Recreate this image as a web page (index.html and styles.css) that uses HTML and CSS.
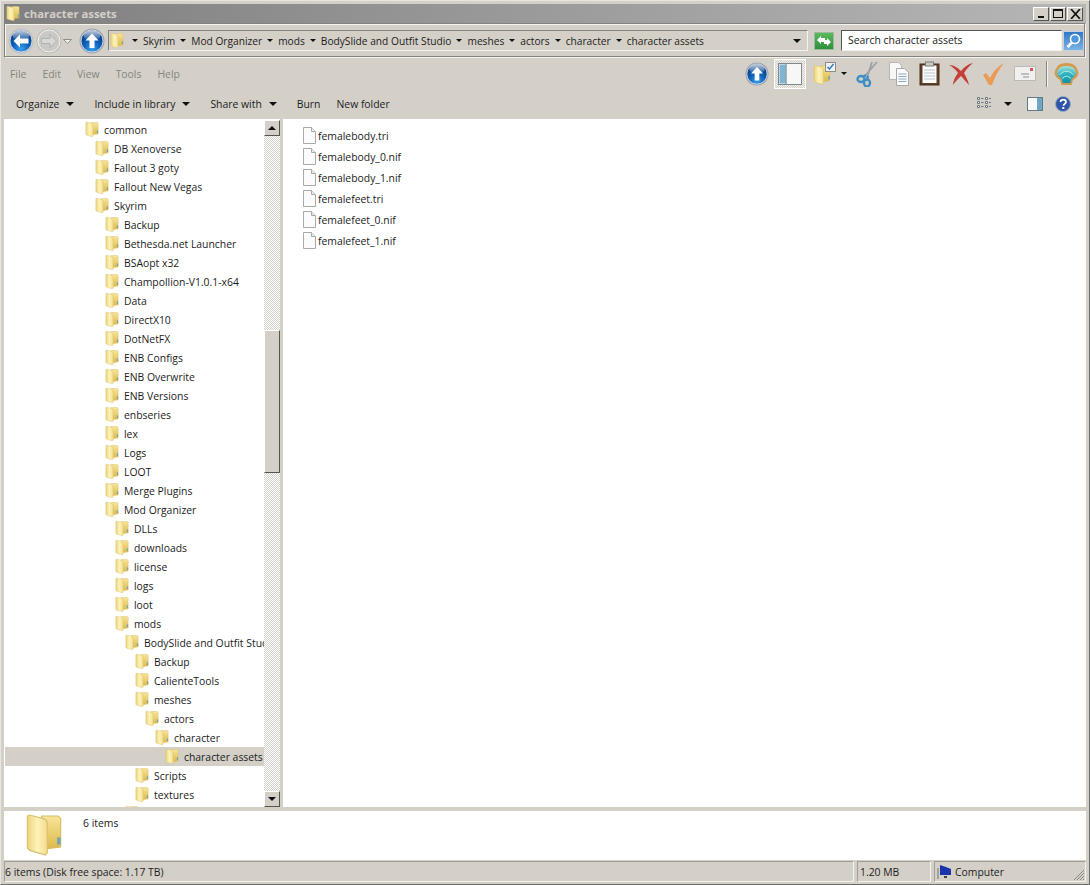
FILE: index.html
```html
<!DOCTYPE html>
<html lang="en">
<head>
  <meta charset="UTF-8">
  <title>character assets</title>
  <link rel="stylesheet" href="styles.css">
</head>
<body>
  <svg class="defs" width="0" height="0">
    <defs>
      <linearGradient id="folderBack" x1="0" y1="0" x2="1" y2="0">
        <stop offset="0" stop-color="#ecd47a"/>
        <stop offset="0.5" stop-color="#fdf3b8"/>
        <stop offset="1" stop-color="#f2dc8a"/>
      </linearGradient>
      <linearGradient id="folderFront" x1="0" y1="0" x2="0" y2="1">
        <stop offset="0" stop-color="#f8e59a"/>
        <stop offset="1" stop-color="#dcb94a"/>
      </linearGradient>
      <radialGradient id="blueBall" cx="0.5" cy="0.85" r="0.85">
        <stop offset="0" stop-color="#3aa0ee"/>
        <stop offset="0.45" stop-color="#0d5fb8"/>
        <stop offset="1" stop-color="#04326f"/>
      </radialGradient>
      <linearGradient id="shine" x1="0" y1="0" x2="0" y2="1">
        <stop offset="0" stop-color="#fff" stop-opacity=".75"/>
        <stop offset="1" stop-color="#fff" stop-opacity=".05"/>
      </linearGradient>
      <radialGradient id="shellFill" cx="0.5" cy="1" r="1">
        <stop offset="0" stop-color="#0f8fa8"/>
        <stop offset="0.6" stop-color="#35b4c0"/>
        <stop offset="1" stop-color="#a4e2dc"/>
      </radialGradient>
      <symbol id="folder" viewBox="0 0 16 18">
        <path d="M7 1h7l1 1v12l-8 1z" fill="url(#folderFront)" stroke="#d7bd62" stroke-width=".5"/>
        <path d="M1 1l1-.4 6 1.600c1 .4 1.400 1 1.400 2v12.200l-.8 1L2 15.500l-1-1z" fill="url(#folderBack)" stroke="#d8c070" stroke-width=".5"/>
        <rect x="13.500" y="10" width="1.500" height="3" fill="#6fa8b0"/>
      </symbol>
      <symbol id="file" viewBox="0 0 13 17">
        <path d="M.5.500h8l4 4v12H.5z" fill="#fbfbfb" stroke="#a9a9a9"/>
        <path d="M8.500.500v4h4" fill="#ececec" stroke="#a9a9a9"/>
      </symbol>
      <symbol id="upball" viewBox="0 0 26 26">
        <circle cx="13" cy="13" r="12.500" fill="#9aa3ad"/>
        <circle cx="13" cy="13" r="11" fill="url(#blueBall)" stroke="#e8eef5" stroke-width=".8"/>
        <ellipse cx="13" cy="7.500" rx="8.500" ry="5" fill="url(#shine)"/>
        <path d="M13 5.500l6.500 7h-4v7.500h-5v-7.500h-4z" fill="#fff"/>
      </symbol>
    </defs>
  </svg>

  <div class="window">
    <div class="titlebar">
      <svg class="title-icon"><use href="#folder"/></svg>
      <span class="title-text">character assets</span>
      <div class="win-btns">
        <button class="win-btn"><span class="glyph-min"></span></button>
        <button class="win-btn"><span class="glyph-max"></span></button>
        <button class="win-btn">
          <svg width="11" height="10" viewBox="0 0 11 10"><path d="M1 0l9 10M10 0l-9 10" stroke="#111" stroke-width="1.700"/></svg>
        </button>
      </div>
    </div>

    <div class="navbar">
      <svg class="nav-ball" viewBox="0 0 26 26">
        <circle cx="13" cy="13" r="12.500" fill="#b9bcc0"/>
        <circle cx="13" cy="13" r="11" fill="url(#blueBall)" stroke="#e8eef5" stroke-width=".8"/>
        <ellipse cx="13" cy="7.500" rx="8.500" ry="5" fill="url(#shine)"/>
        <path d="M5.500 13l6.500-6.500v4h8.500v5h-8.500v4z" fill="#fff"/>
      </svg>
      <svg class="nav-ball fwd" viewBox="0 0 26 26">
        <circle cx="13" cy="13" r="12.500" fill="#bdbdb9"/>
        <circle cx="13" cy="13" r="11" fill="#c9c9c5" stroke="#f2f2f0"/>
        <path d="M20.500 13L14 6.500v4H5.500v5H14v4z" fill="#d8d8d4" stroke="#a4a4a0" stroke-width=".7"/>
      </svg>
      <svg class="nav-drop" width="9" height="5" viewBox="0 0 9 5"><path d="M.5.500h8L4.500 4.500z" fill="#eee" stroke="#8f8f8b"/></svg>
      <svg class="nav-ball up"><use href="#upball"/></svg>

      <div class="address">
        <svg class="addr-icon"><use href="#folder"/></svg>
        <span class="tri crumb-first"></span><span class="crumb">Skyrim</span>
        <span class="tri"></span><span class="crumb">Mod Organizer</span>
        <span class="tri"></span><span class="crumb">mods</span>
        <span class="tri"></span><span class="crumb">BodySlide and Outfit Studio</span>
        <span class="tri"></span><span class="crumb">meshes</span>
        <span class="tri"></span><span class="crumb">actors</span>
        <span class="tri"></span><span class="crumb">character</span>
        <span class="tri"></span><span class="crumb">character assets</span>
        <span class="tri addr-drop"></span>
      </div>

      <div class="refresh">
        <svg width="18" height="16" viewBox="0 0 18 16">
          <path d="M2 7l4-4v2h4v4H6v2zM16 9l-4 4v-2H9V7h3V5z" fill="#fff"/>
        </svg>
      </div>
      <div class="search">Search character assets</div>
      <div class="search-btn">
        <svg width="17" height="17" viewBox="0 0 17 17">
          <circle cx="10" cy="7" r="4.500" fill="#4f96dc" stroke="#fff" stroke-width="1.600"/>
          <path d="M7 10.500L2.500 15" stroke="#fff" stroke-width="2.600"/>
        </svg>
      </div>
    </div>

    <div class="menubar">
      <span class="menu-item">File</span>
      <span class="menu-item">Edit</span>
      <span class="menu-item">View</span>
      <span class="menu-item">Tools</span>
      <span class="menu-item">Help</span>

      <div class="tools">
        <svg class="tool-up"><use href="#upball"/></svg>
        <div class="pane-toggle">
          <svg width="24" height="22" viewBox="0 0 24 22">
            <rect x=".5" y=".5" width="23" height="21" fill="#f7f7f7" stroke="#7f8890"/>
            <rect x="1.500" y="1.500" width="6" height="19" fill="#7fb4d2"/>
            <path d="M8 1v20" stroke="#58788e"/>
          </svg>
        </div>
        <svg class="tool-folder" width="24" height="26" viewBox="0 0 24 26">
          <use href="#folder" width="18" height="24" y="2"/>
          <rect x="12.500" y="1.500" width="10" height="9" fill="#f1f1ef" stroke="#8d8d8d"/>
          <path d="M14.500 6l2 2 4-5" fill="none" stroke="#2a6fc0" stroke-width="1.300"/>
        </svg>
        <span class="tri tool-drop"></span>
        <svg class="tool-icon" width="23" height="26" viewBox="0 0 23 26">
          <path d="M21 1L8 16M16 1L11 17" stroke="#9aa3a8" stroke-width="1.800" fill="none"/>
          <ellipse cx="5" cy="18" rx="3.500" ry="3" fill="none" stroke="#3f8fc4" stroke-width="2.400"/>
          <ellipse cx="11" cy="22" rx="3" ry="3.500" fill="none" stroke="#3f8fc4" stroke-width="2.400"/>
          <path d="M7 16l3-2M11 19l1-4" stroke="#3f8fc4" stroke-width="2.400"/>
        </svg>
        <svg class="tool-icon" width="22" height="24" viewBox="0 0 22 24">
          <path d="M1.500.500h9l3 3v14h-12z" fill="#f8f8f8" stroke="#b5b5b5"/>
          <path d="M8.500 6.500h8l4 4v13h-12z" fill="#fafafa" stroke="#a8a8a8"/>
          <path d="M10.500 12h8M10.500 14.500h8M10.500 17h8M10.500 19.500h8" stroke="#88a8c4"/>
        </svg>
        <svg class="tool-icon" width="21" height="25" viewBox="0 0 21 25">
          <rect x="1" y="3" width="19" height="21" fill="#5e3f28" stroke="#4a2f1c"/>
          <rect x="3.500" y="4.500" width="14" height="17.500" fill="#fbfbfb"/>
          <rect x="6.500" y="1" width="8" height="4" fill="#c9c9c5" stroke="#7d7d7d"/>
          <path d="M5 9h11M5 12h11M5 15h11M5 18h11" stroke="#b8c4cc"/>
        </svg>
        <svg class="tool-icon" width="24" height="24" viewBox="0 0 24 24">
          <path d="M0 3c5 0 9 3 12 6 3-4 7-7 12-8-4 3-7 7-9 10 2 4 4 7 5 12-3-3-6-7-8-9-3 3-6 6-8 9 0-4 2-8 5-12C7 8 4 5 0 3z" fill="#c53f38"/>
        </svg>
        <svg class="tool-icon" width="23" height="24" viewBox="0 0 23 24">
          <path d="M1 13l3-2 4 5C11 10 15 5 22 1c-4 5-9 13-12 22h-3z" fill="#ec9a55"/>
        </svg>
        <svg class="tool-icon" width="22" height="15" viewBox="0 0 22 15">
          <rect x=".5" y=".5" width="21" height="14" fill="#f0f0ee" stroke="#b9b9b5"/>
          <rect x="16" y="2" width="3" height="3" fill="#d8505a"/>
          <path d="M7 8h8M9 11h6" stroke="#8a8f94"/>
        </svg>
        <span class="tool-sep"></span>
        <svg class="tool-shell" width="25" height="24" viewBox="0 0 25 24">
          <path d="M12.500 1C8 1 5 2 3 5 1 8 0 11 1 13c1 2 3 4 5 5l1.500 5h10l1.500-5c2-1 4-3 5-5 1-2 0-5-2-8-2-3-5-4-9.500-4z" fill="#d4984e"/>
          <path d="M12.500 4C8 4 6 5 4.500 7 3 9 2.500 11 3.500 13l4 4 1 4h8l1-4 4-4c1-2 .5-4-1-6-1.500-2-3.500-3-8-3z" fill="url(#shellFill)"/>
          <path d="M5.500 13c4-5 10-5 14 0M8 16.500c3-3 6-3 9 0" fill="none" stroke="#bdeee8" stroke-width="1"/>
        </svg>
      </div>
    </div>

    <div class="cmdbar">
      <span class="cmd">Organize<span class="tri"></span></span>
      <span class="cmd">Include in library<span class="tri"></span></span>
      <span class="cmd">Share with<span class="tri"></span></span>
      <span class="cmd cmd-burn">Burn</span>
      <span class="cmd">New folder</span>
      <div class="cmd-right">
        <svg width="14" height="13" viewBox="0 0 14 13">
          <path d="M.5.500h2v2h-2zM.5 4.500h2v2h-2zM.5 8.500h2v2h-2zM8.500.500h2v2h-2zM8.500 4.500h2v2h-2zM8.500 8.500h2v2h-2z" fill="#f4f4f2" stroke="#6d7882"/>
          <path d="M4 1.500h2.500M4 5.500h2.500M4 9.500h2.500M12 1.500h2M12 5.500h2M12 9.500h2" stroke="#6d7882"/>
        </svg>
        <span class="tri view-drop"></span>
        <svg class="pane-icon" width="16" height="14" viewBox="0 0 16 14">
          <rect x=".5" y=".5" width="15" height="13" fill="#f8f8f8" stroke="#63778a"/>
          <rect x="10" y="1" width="5" height="12" fill="#6fa6c6"/>
        </svg>
        <svg class="help-icon" width="16" height="16" viewBox="0 0 16 16">
          <circle cx="8" cy="8" r="7.500" fill="#2f55a8" stroke="#9aa8c4"/>
          <path d="M5.500 6c0-3.200 5.500-3.200 5.500 0 0 2-2.500 1.800-2.500 3.800" fill="none" stroke="#fff" stroke-width="1.700"/>
          <rect x="7.300" y="11" width="2" height="2" fill="#fff"/>
        </svg>
      </div>
    </div>

    <div class="main">
      <div class="tree">
        <div class="tree-rows">
          <div class="row lv0"><svg><use href="#folder"/></svg>common</div>
          <div class="row lv1"><svg><use href="#folder"/></svg>DB Xenoverse</div>
          <div class="row lv1"><svg><use href="#folder"/></svg>Fallout 3 goty</div>
          <div class="row lv1"><svg><use href="#folder"/></svg>Fallout New Vegas</div>
          <div class="row lv1"><svg><use href="#folder"/></svg>Skyrim</div>
          <div class="row lv2"><svg><use href="#folder"/></svg>Backup</div>
          <div class="row lv2"><svg><use href="#folder"/></svg>Bethesda.net Launcher</div>
          <div class="row lv2"><svg><use href="#folder"/></svg>BSAopt x32</div>
          <div class="row lv2"><svg><use href="#folder"/></svg>Champollion-V1.0.1-x64</div>
          <div class="row lv2"><svg><use href="#folder"/></svg>Data</div>
          <div class="row lv2"><svg><use href="#folder"/></svg>DirectX10</div>
          <div class="row lv2"><svg><use href="#folder"/></svg>DotNetFX</div>
          <div class="row lv2"><svg><use href="#folder"/></svg>ENB Configs</div>
          <div class="row lv2"><svg><use href="#folder"/></svg>ENB Overwrite</div>
          <div class="row lv2"><svg><use href="#folder"/></svg>ENB Versions</div>
          <div class="row lv2"><svg><use href="#folder"/></svg>enbseries</div>
          <div class="row lv2"><svg><use href="#folder"/></svg>lex</div>
          <div class="row lv2"><svg><use href="#folder"/></svg>Logs</div>
          <div class="row lv2"><svg><use href="#folder"/></svg>LOOT</div>
          <div class="row lv2"><svg><use href="#folder"/></svg>Merge Plugins</div>
          <div class="row lv2"><svg><use href="#folder"/></svg>Mod Organizer</div>
          <div class="row lv3"><svg><use href="#folder"/></svg>DLLs</div>
          <div class="row lv3"><svg><use href="#folder"/></svg>downloads</div>
          <div class="row lv3"><svg><use href="#folder"/></svg>license</div>
          <div class="row lv3"><svg><use href="#folder"/></svg>logs</div>
          <div class="row lv3"><svg><use href="#folder"/></svg>loot</div>
          <div class="row lv3"><svg><use href="#folder"/></svg>mods</div>
          <div class="row lv4"><svg><use href="#folder"/></svg>BodySlide and Outfit Studio</div>
          <div class="row lv5"><svg><use href="#folder"/></svg>Backup</div>
          <div class="row lv5"><svg><use href="#folder"/></svg>CalienteTools</div>
          <div class="row lv5"><svg><use href="#folder"/></svg>meshes</div>
          <div class="row lv6"><svg><use href="#folder"/></svg>actors</div>
          <div class="row lv7"><svg><use href="#folder"/></svg>character</div>
          <div class="row lv8 selected"><svg><use href="#folder"/></svg>character assets</div>
          <div class="row lv5"><svg><use href="#folder"/></svg>Scripts</div>
          <div class="row lv5"><svg><use href="#folder"/></svg>textures</div>
          <div class="row lv4"><svg><use href="#folder"/></svg></div>
        </div>
        <div class="scrollbar">
          <div class="sb-btn"><span class="sb-up"></span></div>
          <div class="sb-track sb-before"></div>
          <div class="sb-thumb"></div>
          <div class="sb-track sb-after"></div>
          <div class="sb-btn"><span class="sb-down"></span></div>
        </div>
      </div>

      <div class="files">
        <div class="file"><svg><use href="#file"/></svg>femalebody.tri</div>
        <div class="file"><svg><use href="#file"/></svg>femalebody_0.nif</div>
        <div class="file"><svg><use href="#file"/></svg>femalebody_1.nif</div>
        <div class="file"><svg><use href="#file"/></svg>femalefeet.tri</div>
        <div class="file"><svg><use href="#file"/></svg>femalefeet_0.nif</div>
        <div class="file"><svg><use href="#file"/></svg>femalefeet_1.nif</div>
      </div>
    </div>

    <div class="details">
      <svg class="details-icon"><use href="#folder"/></svg>
      <span class="details-text">6 items</span>
    </div>

    <div class="statusbar">
      <div class="cell cell-main">6 items (Disk free space: 1.17 TB)</div>
      <div class="cell cell-size">1.20 MB</div>
      <div class="cell cell-zone">
        <svg width="16" height="16" viewBox="0 0 16 16">
          <path d="M1 4v11" stroke="#77776f"/>
          <path d="M3 1l6 2 5 2v6H3z" fill="#1a33a8"/>
          <path d="M7 12h3v2H7z" fill="#444"/>
        </svg>
        Computer
        <svg class="grip" width="12" height="12" viewBox="0 0 12 12">
          <path d="M11 1L1 11M11 4l-7 7M11 7l-4 4M11 10l-1 1" stroke="#8a8a84"/>
        </svg>
      </div>
    </div>
  </div>
</body>
</html>
```

FILE: styles.css
```css
* {
  box-sizing: border-box;
}
html, body {
  margin: 0;
  height: 100%;
  overflow: hidden;
}
body {
  font-family: 'Open Sans', 'Noto Sans', sans-serif;
  font-size: 10.4px;
  color: #1c1c1c;
  background-color: #d4d0c8;
}
.defs {
  position: absolute;
}
.window {
  height: 885px;
  display: flex;
  flex-direction: column;
  padding: 3px 3px 2px 3px;
  background-color: #d4d0c8;
  border: 1px solid #6e6e6a;
  border-top-color: #e8e6e0;
  border-left-color: #e8e6e0;
}

/* title bar */
.titlebar {
  height: 19px;
  flex-shrink: 0;
  display: flex;
  align-items: center;
  padding: 0 3px 0 2px;
  background: linear-gradient(90deg, #808080, #b6b6b6);
}
.title-icon {
  width: 14px;
  height: 17px;
}
.title-text {
  margin-left: 4px;
  font-weight: bold;
  font-size: 11.3px;
  color: #d4d0c8;
}
.win-btns {
  margin-left: auto;
  display: flex;
  gap: 1px;
}
.win-btn {
  width: 16px;
  height: 14px;
  padding: 0;
  display: flex;
  align-items: center;
  justify-content: center;
  background-color: #d4d0c8;
  border: 1px solid;
  border-color: #fff #55554f #55554f #fff;
}
.glyph-min {
  width: 6px;
  height: 2px;
  margin-top: 7px;
  background-color: #111;
}
.glyph-max {
  width: 10px;
  height: 9px;
  border: 1px solid #111;
  border-top-width: 2px;
}

/* back/forward + address */
.navbar {
  height: 35px;
  flex-shrink: 0;
  display: flex;
  align-items: center;
  padding: 0 1px 0 3px;
  border: 1px solid #f4f3ef;
  border-top-color: #84827c;
  border-left-color: #84827c;
  box-shadow: inset -1px -1px 0 #84827c, inset 1px 1px 0 #f4f3ef;
}
.nav-ball {
  width: 26px;
  height: 26px;
  flex-shrink: 0;
}
.nav-ball.fwd {
  margin-left: 2px;
}
.nav-drop {
  margin: 2px 2px 0 1px;
  flex-shrink: 0;
}
.nav-ball.up {
  margin-left: 5px;
}
.address {
  width: 700px;
  height: 21px;
  margin-left: 3px;
  flex-shrink: 0;
  display: flex;
  align-items: center;
  font-size: 10.2px;
  border: 1px solid #f4f3ef;
  border-top-color: #85837d;
  border-left-color: #85837d;
  white-space: nowrap;
}
.addr-icon {
  width: 14px;
  height: 17px;
  margin-left: 1px;
}
.tri {
  display: inline-block;
  width: 0;
  height: 0;
  flex-shrink: 0;
  border-left: 4px solid transparent;
  border-right: 4px solid transparent;
  border-top: 4px solid #111;
}
.address .tri {
  margin: 0 1px;
  border-width: 3px 3px 0;
}
.address .crumb-first {
  margin-left: 8px;
}
.crumb {
  margin: 0 4px 0 4px;
}
.address .addr-drop {
  margin-left: auto;
  margin-right: 6px;
  border-width: 4px 4px 0;
}
.refresh {
  width: 20px;
  height: 18px;
  margin-left: 6px;
  flex-shrink: 0;
  background: linear-gradient(#5cb85c, #2f8f3a);
  border: 1px solid #9db99f;
}
.search {
  width: 221px;
  height: 21px;
  margin-left: 7px;
  flex-shrink: 0;
  padding-left: 6px;
  line-height: 19px;
  background-color: #fff;
  border: 1px solid #f4f3ef;
  border-top-color: #55554f;
  border-left-color: #55554f;
}
.search-btn {
  width: 21px;
  height: 20px;
  margin-left: 1px;
  flex-shrink: 0;
  display: flex;
  align-items: center;
  justify-content: center;
  background: linear-gradient(#2f78c8, #7fb4e6);
  border: 1px solid #c5d2de;
}

/* menu + toolbar icons */
.menubar {
  height: 30px;
  flex-shrink: 0;
  display: flex;
  align-items: center;
  padding: 1px 0 0 6px;
  color: #85857f;
}
.menu-item {
  margin-right: 16px;
}
.tools {
  margin-left: auto;
  display: flex;
  align-items: center;
  padding-right: 7px;
}
.tool-up {
  width: 24px;
  height: 24px;
  margin-right: 1px;
}
.pane-toggle {
  width: 32px;
  height: 30px;
  margin-left: 4px;
  display: flex;
  align-items: center;
  justify-content: center;
  border: 1px solid #fff;
  background: repeating-conic-gradient(#f2f1ed 0 25%, #d4d0c8 0 50%) 0 0 / 2px 2px;
}
.tool-folder {
  margin-left: 7px;
}
.tool-drop {
  margin: 0 9px 0 4px;
  border-width: 3px 3px 0;
}
.tool-icon {
  margin-right: 9px;
}
.tool-sep {
  width: 2px;
  height: 26px;
  margin-left: 1px;
  background-color: #f4f3ef;
  border-left: 1px solid #88867f;
}
.tool-shell {
  margin-left: 6px;
}

/* organize row */
.cmdbar {
  height: 31px;
  flex-shrink: 0;
  display: flex;
  align-items: center;
  padding-left: 12px;
}
.cmd {
  display: flex;
  align-items: center;
  margin-right: 20px;
}
.cmd .tri {
  margin-left: 7px;
}
.cmd-burn {
  margin-right: 16px;
}
.cmd-right {
  margin-left: auto;
  display: flex;
  align-items: center;
  padding-right: 15px;
}
.view-drop {
  margin-left: 13px;
}
.pane-icon {
  margin-left: 15px;
}
.help-icon {
  margin-left: 12px;
}

/* tree + files */
.main {
  flex: 1;
  min-height: 0;
  display: flex;
  overflow: hidden;
}
.tree {
  width: 276px;
  flex-shrink: 0;
  display: flex;
  background-color: #fff;
  overflow: hidden;
}
.tree-rows {
  width: 260px;
  flex-shrink: 0;
  overflow: hidden;
  padding-top: 1px;
}
.row {
  height: 19px;
  display: flex;
  align-items: center;
  white-space: nowrap;
}
.row svg {
  width: 14px;
  height: 17px;
  flex-shrink: 0;
  margin-right: 5px;
}
.row.selected {
  margin-left: 1px;
  background-color: #d4d0c8;
}
.lv0 { padding-left: 81px; }
.lv1 { padding-left: 91px; }
.lv2 { padding-left: 101px; }
.lv3 { padding-left: 111px; }
.lv4 { padding-left: 121px; }
.lv5 { padding-left: 131px; }
.lv6 { padding-left: 141px; }
.lv7 { padding-left: 151px; }
.lv8 { padding-left: 160px; }

.scrollbar {
  width: 16px;
  display: flex;
  flex-direction: column;
  padding-top: 1px;
}
.sb-btn {
  height: 16px;
  flex-shrink: 0;
  display: flex;
  align-items: center;
  justify-content: center;
  background-color: #d4d0c8;
  border: 1px solid;
  border-color: #fff #55554f #55554f #fff;
}
.sb-up, .sb-down {
  width: 0;
  height: 0;
  border-left: 4px solid transparent;
  border-right: 4px solid transparent;
}
.sb-up {
  border-bottom: 4px solid #111;
}
.sb-down {
  border-top: 4px solid #111;
}
.sb-track {
  background: repeating-conic-gradient(#fff 0 25%, #d4d0c8 0 50%) 0 0 / 2px 2px;
}
.sb-before {
  height: 194px;
}
.sb-after {
  flex: 1;
}
.sb-thumb {
  height: 143px;
  background-color: #d4d0c8;
  border: 1px solid;
  border-color: #fff #55554f #55554f #fff;
}
.files {
  flex: 1;
  margin-left: 3px;
  padding: 6px 0 0 20px;
  background-color: #fff;
}
.file {
  height: 21px;
  display: flex;
  align-items: center;
}
.file svg {
  width: 13px;
  height: 17px;
  margin-right: 2px;
}

/* details pane + status */
.details {
  height: 49px;
  flex-shrink: 0;
  margin-top: 4px;
  display: flex;
  align-items: flex-start;
  padding-left: 21px;
  background-color: #fff;
}
.details-icon {
  width: 38px;
  height: 44px;
  margin-top: 2px;
}
.details-text {
  margin: 5px 0 0 20px;
}
.statusbar {
  height: 21px;
  flex-shrink: 0;
  margin-top: 1px;
  display: flex;
  gap: 3px;
}
.cell {
  display: flex;
  align-items: center;
  border: 1px solid #f4f3ef;
  border-top-color: #a09e98;
  border-left-color: #a09e98;
}
.cell-main {
  width: 850px;
  padding-left: 0;
}
.cell-size {
  width: 74px;
  padding-left: 2px;
}
.cell-zone {
  flex: 1;
  padding-left: 2px;
  gap: 2px;
  position: relative;
}
.grip {
  position: absolute;
  right: 0;
  bottom: 0;
}
```
